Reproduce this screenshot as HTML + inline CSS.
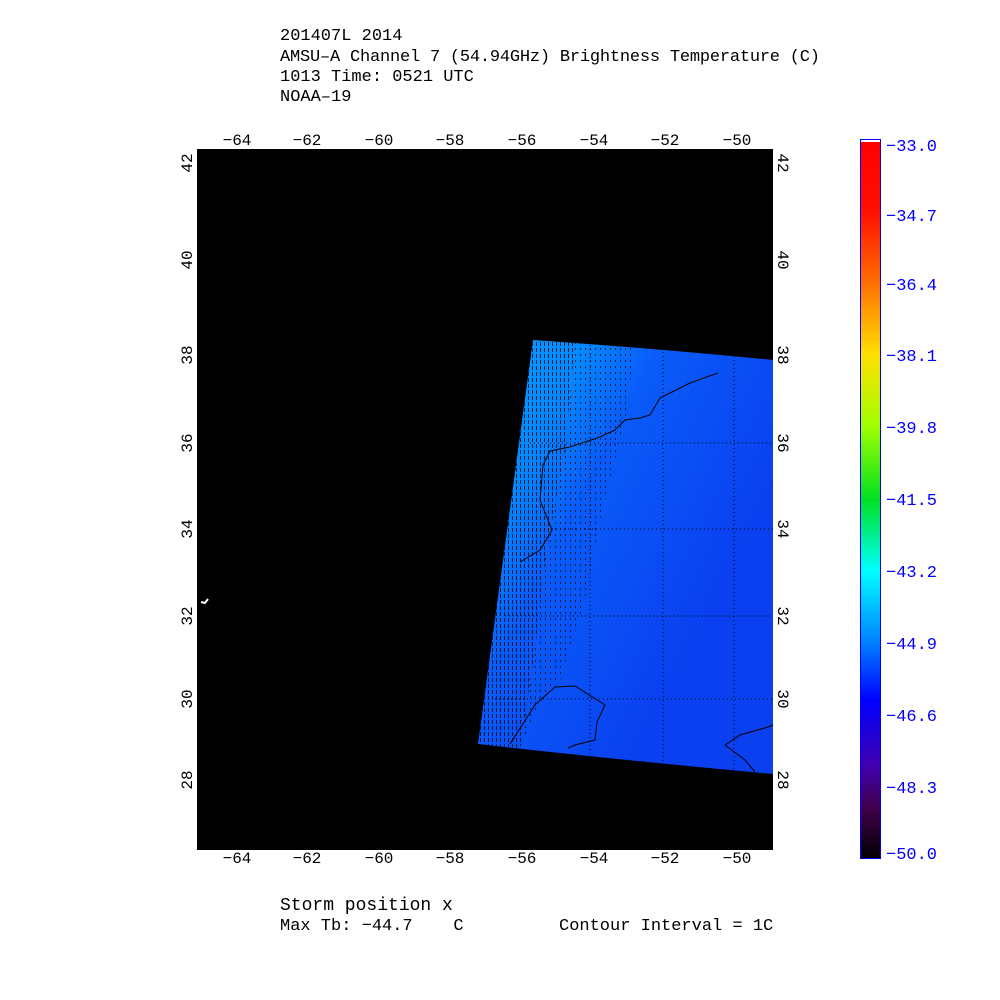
<!DOCTYPE html>
<html><head><style>html,body{margin:0;padding:0;background:#fff;}svg{display:block}text{white-space:pre}</style></head>
<body>
<svg width="1000" height="1000" xmlns="http://www.w3.org/2000/svg" font-family="Liberation Sans, sans-serif" xml:space="preserve">
<defs>
<linearGradient id="cb" x1="0" y1="0" x2="0" y2="1">
<stop offset="0" stop-color="#ff0000"/>
<stop offset="0.1" stop-color="#ff1000"/>
<stop offset="0.2" stop-color="#ff7000"/>
<stop offset="0.3" stop-color="#ffe000"/>
<stop offset="0.4" stop-color="#a0ff00"/>
<stop offset="0.5" stop-color="#00e020"/>
<stop offset="0.6" stop-color="#00ffff"/>
<stop offset="0.7" stop-color="#0080ff"/>
<stop offset="0.78" stop-color="#0000ff"/>
<stop offset="0.87" stop-color="#4000b0"/>
<stop offset="0.93" stop-color="#40004a"/>
<stop offset="1" stop-color="#000000"/>
</linearGradient>
<linearGradient id="dg" x1="0" y1="0" x2="0.8" y2="0.6">
<stop offset="0" stop-color="#0aa0ff"/>
<stop offset="0.3" stop-color="#0588ff"/>
<stop offset="0.5" stop-color="#0a5cf8"/>
<stop offset="1" stop-color="#0a40f0"/>
</linearGradient>
<pattern id="hatch" width="4" height="6" patternUnits="userSpaceOnUse"><rect x="0" y="0" width="1" height="4" fill="#000"/></pattern>
<pattern id="dots" width="5" height="6" patternUnits="userSpaceOnUse"><rect x="0" y="0" width="1" height="2" fill="#000"/></pattern>
</defs>
<g font-family="Liberation Mono, monospace" font-size="17" fill="#000">
<text x="280" y="40">201407L 2014</text>
<text x="280" y="61" textLength="540">AMSU–A Channel 7 (54.94GHz) Brightness Temperature (C)</text>
<text x="280" y="81">1013 Time: 0521 UTC</text>
<text x="280" y="101">NOAA–19</text>
</g>
<rect x="195" y="147" width="580" height="705" fill="#fff"/>
<rect x="197" y="149" width="576" height="701" fill="#000"/>
<path d="M533,340 Q650,348 773,360 L773,774 Q620,760 478,744 Z" fill="url(#dg)"/>
<path d="M533,340 L575,342 L565,450 L545,560 L535,650 L520,748 L478,744 Z" fill="url(#hatch)" opacity="0.75"/>
<path d="M575,342 L635,346 L625,420 L600,520 L585,600 L560,680 L540,700 L520,748 L535,650 L545,560 L565,450 Z" fill="url(#dots)" opacity="0.7"/>
<g stroke="#000" stroke-dasharray="1,3" stroke-width="1" fill="none">
<line x1="590" y1="345" x2="590" y2="762"/><line x1="663" y1="348" x2="663" y2="766"/><line x1="734" y1="352" x2="734" y2="770"/>
<line x1="530" y1="443" x2="773" y2="443"/><line x1="520" y1="529" x2="773" y2="529"/><line x1="505" y1="616" x2="773" y2="616"/><line x1="495" y1="699" x2="773" y2="699"/>
</g>
<g stroke="#000" fill="none" stroke-width="1">
<path d="M718,373 L690,383 L660,398 L650,415 L640,418 L625,420 L615,430 L600,437 L570,447 L550,451 L543,465 L540,500 L552,530 L540,550 L520,562"/>
<path d="M510,744 L535,705 L555,687 L575,686 L605,705 L597,722 L595,740 L575,745 L568,748"/>
<path d="M725,745 L740,735 L768,727 L773,725 M725,745 L745,760 L755,772"/>
</g>
<path d="M201,602 L205,603 L208,599" stroke="#fff" stroke-width="2" fill="none"/>
<g font-family="Liberation Mono, monospace" font-size="16" fill="#000" text-anchor="middle">
<text x="237" y="145">−64</text><text x="307" y="145">−62</text><text x="379" y="145">−60</text><text x="450" y="145">−58</text><text x="522" y="145">−56</text><text x="594" y="145">−54</text><text x="665" y="145">−52</text><text x="737" y="145">−50</text>
<text x="237" y="863">−64</text><text x="307" y="863">−62</text><text x="379" y="863">−60</text><text x="450" y="863">−58</text><text x="522" y="863">−56</text><text x="594" y="863">−54</text><text x="665" y="863">−52</text><text x="737" y="863">−50</text>
</g>
<g font-family="Liberation Mono, monospace" font-size="16" fill="#000" text-anchor="middle">
<text transform="translate(192,163) rotate(-90)">42</text><text transform="translate(192,260) rotate(-90)">40</text><text transform="translate(192,355) rotate(-90)">38</text><text transform="translate(192,443) rotate(-90)">36</text><text transform="translate(192,529) rotate(-90)">34</text><text transform="translate(192,616) rotate(-90)">32</text><text transform="translate(192,699) rotate(-90)">30</text><text transform="translate(192,780) rotate(-90)">28</text>
<text transform="translate(778,163) rotate(90)">42</text><text transform="translate(778,260) rotate(90)">40</text><text transform="translate(778,355) rotate(90)">38</text><text transform="translate(778,443) rotate(90)">36</text><text transform="translate(778,529) rotate(90)">34</text><text transform="translate(778,616) rotate(90)">32</text><text transform="translate(778,699) rotate(90)">30</text><text transform="translate(778,780) rotate(90)">28</text>
</g>
<rect x="860.5" y="139.5" width="20" height="719" fill="url(#cb)" stroke="#0000ff" stroke-width="1"/>
<rect x="861" y="140" width="19" height="2" fill="#fff"/>
<g font-family="Liberation Mono, monospace" font-size="17" fill="#0000ff">
<text x="886" y="151">−33.0</text><text x="886" y="221">−34.7</text><text x="886" y="290">−36.4</text><text x="886" y="361">−38.1</text><text x="886" y="433">−39.8</text><text x="886" y="505">−41.5</text><text x="886" y="577">−43.2</text><text x="886" y="649">−44.9</text><text x="886" y="721">−46.6</text><text x="886" y="793">−48.3</text><text x="886" y="859">−50.0</text>
</g>
<g font-family="Liberation Mono, monospace" fill="#000">
<text x="280" y="910" font-size="18">Storm position x</text>
<text x="280" y="930" font-size="17">Max Tb: −44.7    C</text>
<text x="559" y="930" font-size="17">Contour Interval = 1C</text>
</g>
</svg>
</body></html>
